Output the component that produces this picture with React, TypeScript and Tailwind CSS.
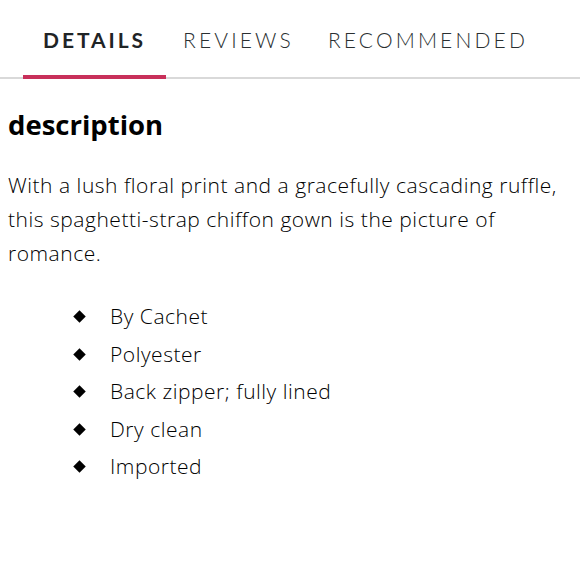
const tabs = ['DETAILS', 'REVIEWS', 'RECOMMENDED'];

const features = [
  'By Cachet',
  'Polyester',
  'Back zipper; fully lined',
  'Dry clean',
  'Imported',
];

export default function App() {
  return (
    <div className="w-[580px] h-[580px] bg-white text-[#1a1a1a] font-['Lato',sans-serif] overflow-hidden">
      <div className="flex border-b-2 border-[#d9d9d9] pl-[23px] pt-[25px]">
        {tabs.map((tab, i) => (
          <div
            key={tab}
            className={
              i === 0
                ? 'px-[20px] pb-[20px] -mb-[2px] border-b-4 border-[#c8305a] text-[21px] leading-[30px] font-bold tracking-[0.14em] text-[#1f2426]'
                : 'px-[17px] pb-[20px] text-[21px] leading-[30px] font-light tracking-[0.15em] text-[#2a2f31]'
            }
          >
            {tab}
          </div>
        ))}
      </div>

      <div className="px-[8px] font-['Open_Sans',sans-serif]">
        <h2 className="mt-[28px] text-[27.5px] leading-[36px] font-bold text-black">description</h2>
        <p className="mt-[25px] text-[21px] leading-[34px] font-light tracking-[0.025em] text-black">
          With a lush floral print and a gracefully cascading ruffle, this spaghetti-strap chiffon gown is the picture of romance.
        </p>
        <ul className="mt-[28px] pl-[66px] flex flex-col">
          {features.map((f) => (
            <li key={f} className="flex items-center h-[37.5px] text-[21px] font-light tracking-[0.025em] text-black">
              <span className="w-[11px] h-[11px] bg-black rotate-45 scale-[0.8] mr-[25px]" />
              {f}
            </li>
          ))}
        </ul>
      </div>
    </div>
  );
}
